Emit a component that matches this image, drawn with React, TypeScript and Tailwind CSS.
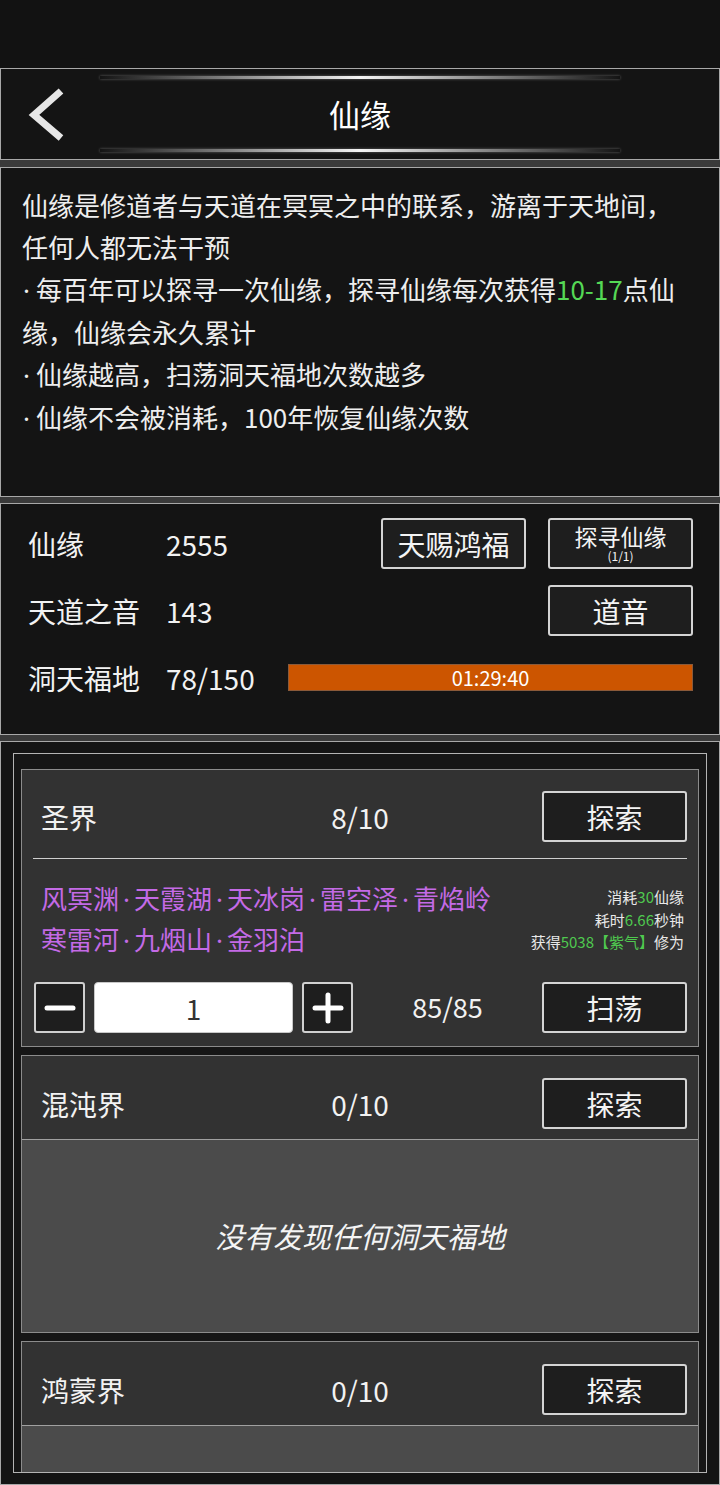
import React from "react";

const FONT = "font-['Noto_Sans_CJK_SC','Noto_Sans',sans-serif]";

function Dot({ className = "" }: { className?: string }) {
  return <span className={`font-['Noto_Sans',sans-serif] ${className}`}>·</span>;
}

function DarkBtn({
  children,
  className = "",
}: {
  children: React.ReactNode;
  className?: string;
}) {
  return (
    <div
      className={`flex h-[51px] w-[145px] flex-col items-center justify-center rounded-[3px] border-2 border-[#d4d4d4] bg-[#1e1e1e] text-[#f4f4f4] ${className}`}
    >
      {children}
    </div>
  );
}

function SquareBtn({ kind }: { kind: "minus" | "plus" }) {
  return (
    <div className="flex h-[51px] w-[51px] items-center justify-center rounded-[3px] border-2 border-[#d0d0d0] bg-[#1e1e1e]">
      <svg width="32" height="32" viewBox="0 0 32 32">
        <line x1="3" y1="16" x2="29" y2="16" stroke="#ffffff" strokeWidth="5" strokeLinecap="round" />
        {kind === "plus" && (
          <line x1="16" y1="3" x2="16" y2="29" stroke="#ffffff" strokeWidth="5" strokeLinecap="round" />
        )}
      </svg>
    </div>
  );
}

function Glow() {
  return (
    <div className="h-[3px] w-[520px] bg-linear-to-r from-transparent via-[#f4f4f4] to-transparent shadow-[0_0_3px_rgba(255,255,255,0.35)]" />
  );
}

function RealmHeader({ name, count, top }: { name: string; count: string; top: string }) {
  return (
    <div className={`grid grid-cols-3 items-center ${top}`}>
      <div className="pl-[19px] text-[28px] text-[#f2f2f2]">{name}</div>
      <div className="text-center text-[28px] text-[#f2f2f2]">{count}</div>
      <div className="mr-[11px] justify-self-end">
        <DarkBtn className="text-[28px]">探索</DarkBtn>
      </div>
    </div>
  );
}

export default function App() {
  return (
    <div className={`${FONT} min-h-[1485px] w-[720px] overflow-hidden bg-[#3a3a3a] text-[#f2f2f2]`}>
      {/* status area */}
      <div className="h-[68px] bg-[#121212]" />

      {/* header */}
      <div className="flex h-[92px] flex-col items-center border border-[#a8a8a8] bg-[#141414] pt-[7px]">
        <Glow />
        <div className="flex h-[70px] w-full items-center">
          <div className="flex w-[100px] items-center pl-[26px]">
            <svg width="44" height="56" viewBox="0 0 44 56">
              <polyline
                points="34,5 7,29 34,52"
                fill="none"
                stroke="#e6e6e6"
                strokeWidth="7"
                strokeLinecap="butt"
                strokeLinejoin="miter"
              />
            </svg>
          </div>
          <div className="flex-1 text-center text-[31px] text-white">仙缘</div>
          <div className="w-[100px]" />
        </div>
        <Glow />
      </div>

      {/* description */}
      <div className="mt-[7px] h-[330px] border border-[#a8a8a8] bg-[#141414] px-[21px] pt-[16px] text-[26px] leading-[42px] text-[#eeeeee]">
        <div className="whitespace-nowrap">仙缘是修道者与天道在冥冥之中的联系，游离于天地间，</div>
        <div className="whitespace-nowrap">任何人都无法干预</div>
        <div className="whitespace-nowrap">
          <Dot className="pl-[1px] pr-[6px]" />每百年可以探寻一次仙缘，探寻仙缘每次获得
          <span className="text-[#55d855]">10-17</span>点仙
        </div>
        <div className="whitespace-nowrap">缘，仙缘会永久累计</div>
        <div className="whitespace-nowrap">
          <Dot className="pl-[1px] pr-[6px]" />仙缘越高，扫荡洞天福地次数越多
        </div>
        <div className="whitespace-nowrap">
          <Dot className="pl-[1px] pr-[6px]" />仙缘不会被消耗，100年恢复仙缘次数
        </div>
      </div>

      {/* stats */}
      <div className="mt-[6px] h-[232px] border border-[#a8a8a8] bg-[#141414] pl-[27px] pr-[26px] pt-[14px] text-[28px] text-[#f2f2f2]">
        <div className="flex h-[51px] items-center">
          <span className="w-[138px]">仙缘</span>
          <span>2555</span>
          <div className="ml-auto flex gap-[22px]">
            <DarkBtn className="text-[28px]">天赐鸿福</DarkBtn>
            <DarkBtn>
              <span className="text-[23px] leading-[25px]">探寻仙缘</span>
              <span className="text-[12px] leading-[14px]">(1/1)</span>
            </DarkBtn>
          </div>
        </div>
        <div className="mt-[16px] flex h-[51px] items-center">
          <span className="w-[138px]">天道之音</span>
          <span>143</span>
          <div className="ml-auto">
            <DarkBtn className="text-[28px]">道音</DarkBtn>
          </div>
        </div>
        <div className="mt-[16px] flex h-[51px] items-center">
          <span className="w-[138px]">洞天福地</span>
          <span className="w-[122px]">78/150</span>
          <div className="flex h-[27px] flex-1 items-center justify-center border border-[#8a5a3a] bg-[#cc5500] text-[20px] leading-none text-white">
            01:29:40
          </div>
        </div>
      </div>

      {/* main */}
      <div className="mt-[6px] h-[744px] border border-[#a8a8a8] bg-[#141414] px-[12px] pt-[11px]">
        <div className="flex h-[720px] flex-col gap-[8px] overflow-hidden border border-[#b4b4b4] bg-[#161616] px-[7px] pt-[15px]">
          {/* card 1 */}
          <div className="shrink-0 border border-[#8c8c8c] bg-[#323232] pb-[13px]">
            <RealmHeader name="圣界" count="8/10" top="pt-[21px]" />
            <div className="mx-[11px] mt-[16px] h-px bg-[#cfcfcf]" />
            <div className="flex h-[99px] pt-[19px]">
              <div className="pl-[19px] text-[26px] leading-[40px] text-[#c46ae6]">
                <div className="whitespace-nowrap">
                  风冥渊<Dot className="px-[4px]" />天霞湖<Dot className="px-[4px]" />天冰岗
                  <Dot className="px-[4px]" />雷空泽<Dot className="px-[4px]" />青焰岭
                </div>
                <div className="whitespace-nowrap">
                  寒雷河<Dot className="px-[4px]" />九烟山<Dot className="px-[4px]" />金羽泊
                </div>
              </div>
              <div className="ml-auto mr-[14px] whitespace-nowrap pt-[8px] text-right text-[15px] leading-[22.5px] text-[#e8e8e8]">
                <div>
                  消耗<span className="text-[#4fc94f]">30</span>仙缘
                </div>
                <div>
                  耗时<span className="text-[#4fc94f]">6.66</span>秒钟
                </div>
                <div>
                  获得<span className="text-[#4fc94f]">5038【紫气】</span>修为
                </div>
              </div>
            </div>
            <div className="mt-[24px] flex items-center pl-[12px] pr-[11px]">
              <SquareBtn kind="minus" />
              <div className="ml-[9px] flex h-[51px] w-[199px] items-center justify-center rounded-[4px] border border-[#c8c8c8] bg-white text-[28px] text-[#333333]">
                1
              </div>
              <div className="ml-[9px]">
                <SquareBtn kind="plus" />
              </div>
              <div className="flex-1 text-center text-[27px] text-[#f2f2f2]">85/85</div>
              <DarkBtn className="text-[28px]">扫荡</DarkBtn>
            </div>
          </div>

          {/* card 2 */}
          <div className="shrink-0 border border-[#8c8c8c] bg-[#323232]">
            <div className="pb-[10px]">
              <RealmHeader name="混沌界" count="0/10" top="pt-[22px]" />
            </div>
            <div className="flex h-[193px] items-center justify-center border-t border-[#a0a0a0] bg-[#4b4b4b] text-[29px] italic text-[#f4f4f4]">
              没有发现任何洞天福地
            </div>
          </div>

          {/* card 3 */}
          <div className="shrink-0 border border-[#8c8c8c] bg-[#323232]">
            <div className="pb-[10px]">
              <RealmHeader name="鸿蒙界" count="0/10" top="pt-[22px]" />
            </div>
            <div className="h-[193px] border-t border-[#a0a0a0] bg-[#4b4b4b]" />
          </div>
        </div>
      </div>
    </div>
  );
}
